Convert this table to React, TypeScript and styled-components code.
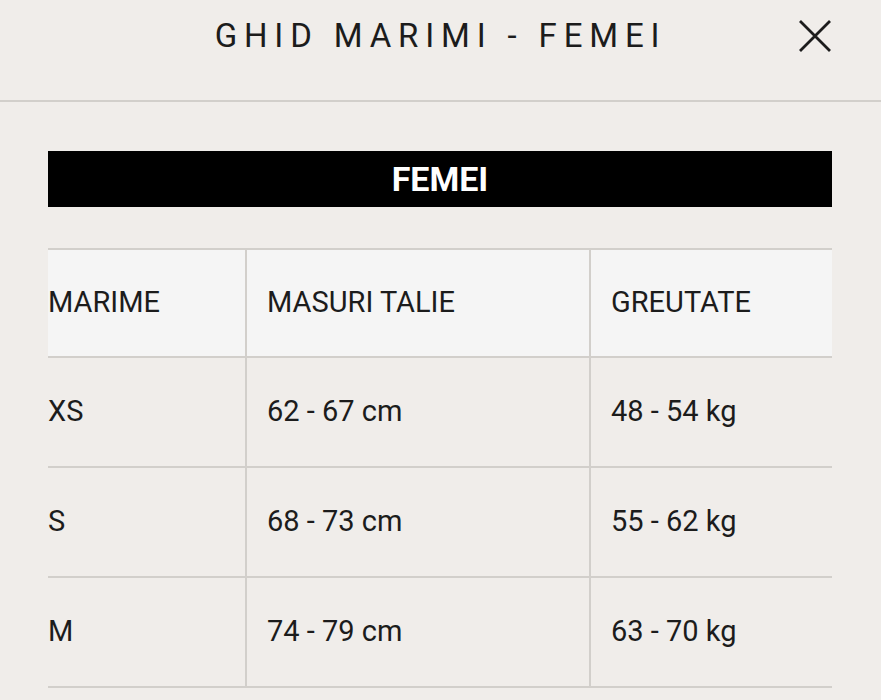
import { FC } from 'react';
import styled, { createGlobalStyle } from 'styled-components';

const GlobalStyle = createGlobalStyle`
  html, body {
    margin: 0;
    padding: 0;
    background: #f0edea;
    font-family: Roboto, "Liberation Sans", sans-serif;
    color: #1c1c1c;
  }
  * { box-sizing: border-box; }
`;

const rows = [
  ['XS', '62 - 67 cm', '48 - 54 kg'],
  ['S', '68 - 73 cm', '55 - 62 kg'],
  ['M', '74 - 79 cm', '63 - 70 kg'],
];

const App: FC = () => {
  return (
    <Page>
      <GlobalStyle />
      <Header>
        <Title>GHID MARIMI - FEMEI</Title>
        <CloseButton aria-label="Inchide">
          <svg width="34" height="34" viewBox="0 0 34 34">
            <path d="M2 2 L32 32 M32 2 L2 32" stroke="#1c1c1c" strokeWidth="2.8" fill="none" />
          </svg>
        </CloseButton>
      </Header>
      <Content>
        <Banner>FEMEI</Banner>
        <Table>
          <thead>
            <tr>
              <HeadCell>MARIME</HeadCell>
              <HeadCell>MASURI TALIE</HeadCell>
              <HeadCell>GREUTATE</HeadCell>
            </tr>
          </thead>
          <tbody>
            {rows.map((r) => (
              <tr key={r[0]}>
                {r.map((c, i) => (
                  <Cell key={i}>{c}</Cell>
                ))}
              </tr>
            ))}
          </tbody>
        </Table>
      </Content>
    </Page>
  );
};

export default App;

const Page = styled.div`
  width: 881px;
  height: 700px;
  overflow: hidden;
  background: #f0edea;
`;

const Header = styled.header`
  position: relative;
  height: 102px;
  border-bottom: 2px solid #d2cfcb;
  display: flex;
  justify-content: center;
  padding-top: 14px;
`;

const Title = styled.h1`
  margin: 0;
  font-size: 33px;
  font-weight: 400;
  letter-spacing: 6.85px;
  line-height: 44px;
  color: #1c1c1c;
`;

const CloseButton = styled.button`
  position: absolute;
  right: 49px;
  top: 19px;
  width: 34px;
  height: 34px;
  padding: 0;
  border: 0;
  background: transparent;
  display: flex;
  cursor: pointer;
`;

const Content = styled.main`
  padding: 49px 49px 0 48px;
`;

const Banner = styled.div`
  height: 56px;
  background: #000;
  color: #fff;
  font-size: 34px;
  font-weight: 700;
  display: flex;
  align-items: center;
  justify-content: center;
  margin-bottom: 41px;
`;

const Table = styled.table`
  width: 100%;
  border-collapse: collapse;
  table-layout: fixed;
  border-top: 2px solid #d2cfcb;
`;

const cellBase = `
  height: 110px;
  padding: 0 0 2px 20px;
  font-size: 29px;
  text-align: left;
  vertical-align: middle;
  border-bottom: 2px solid #d2cfcb;
  border-left: 2px solid #d2cfcb;
  color: #1c1c1c;

  &:first-child {
    padding-left: 0;
    border-left: 0;
    width: 198px;
  }
  &:nth-child(2) { width: 344px; }
`;

const HeadCell = styled.th`
  ${cellBase}
  font-weight: 400;
  background: #f5f5f5;
  height: 108px;
`;

const Cell = styled.td`
  ${cellBase}
`;
